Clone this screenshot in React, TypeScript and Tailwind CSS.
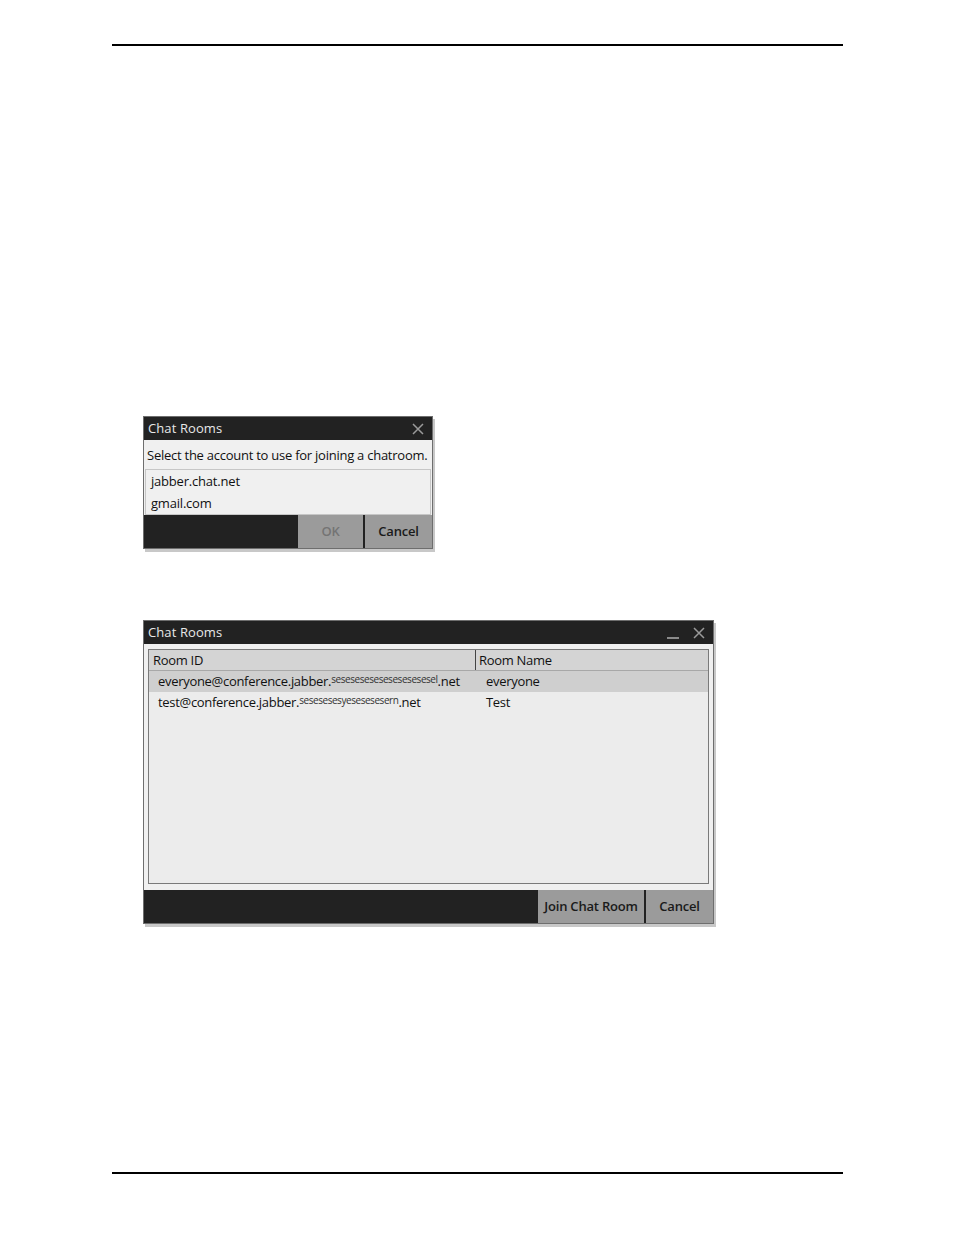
import type { ReactNode } from 'react'

const font = { fontFamily: '"Open Sans", "Noto Sans", sans-serif' }

function CloseIcon() {
  return (
    <svg width="12" height="12" viewBox="0 0 12 12" className="text-[#9a9a9a]">
      <path d="M1 1 L11 11 M11 1 L1 11" stroke="currentColor" strokeWidth="1.5" />
    </svg>
  )
}

function Dialog({
  width,
  minimize,
  children,
}: {
  width: string
  minimize?: boolean
  children: ReactNode
}) {
  return (
    <div className={`${width} border border-[#6e6e6e] bg-[#f0f0f0] shadow-[2px_3px_0_#c8c8c8]`}>
      <div className="h-[23px] bg-[#222222] flex items-center justify-between pl-[4px] pr-[8px]">
        <span className="text-[13px] text-[#e8e8e8] tracking-[0.1px]">Chat Rooms</span>
        <div className="flex items-center gap-[14px]">
          {minimize && <div className="w-[12px] h-[2px] bg-[#8a8a8a] mt-[10px]" />}
          <CloseIcon />
        </div>
      </div>
      {children}
    </div>
  )
}

function FooterButton({ label, disabled, width }: { label: string; disabled?: boolean; width: string }) {
  return (
    <div
      className={`${width} h-full bg-[#9b9b9b] flex items-center justify-center text-[13px] font-semibold tracking-[-0.2px] ${
        disabled ? 'text-[#747474]' : 'text-[#1a1a1a]'
      }`}
    >
      {label}
    </div>
  )
}

function Obfuscated({ text }: { text: string }) {
  return (
    <span className="inline-block leading-none text-[10px] tracking-[-0.45px] align-[3px] text-[#333]">
      {text}
    </span>
  )
}

export default function App() {
  return (
    <div className="w-[954px] h-[1235px] bg-white relative" style={font}>
      <div className="pt-[44px] px-[112px]">
        <div className="h-[2px] bg-black w-[731px]" />
      </div>

      <div className="pl-[143px] pt-[370px]">
        <Dialog width="w-[290px]">
          <div className="px-[3px] pt-[6px] text-[13px] text-[#111] leading-[18px] whitespace-nowrap tracking-[-0.25px]">
            Select the account to use for joining a chatroom.
          </div>
          <div className="mx-[1px] mt-[5px] border border-[#c6c6c6] bg-[#f0f0f0] text-[13px] text-[#111] pl-[5px] tracking-[-0.2px]">
            <div className="h-[22px] leading-[22px]">jabber.chat.net</div>
            <div className="h-[22px] leading-[22px]">gmail.com</div>
          </div>
          <div className="h-[33px] bg-[#222222] flex justify-end gap-[2px]">
            <FooterButton label="OK" disabled width="w-[65px]" />
            <FooterButton label="Cancel" width="w-[67px]" />
          </div>
        </Dialog>
      </div>

      <div className="pl-[143px] pt-[71px]">
        <Dialog width="w-[571px]" minimize>
          <div className="px-[4px] pt-[5px] pb-[6px]">
            <div className="h-[235px] border border-[#7a7a7a] bg-[#ececec] text-[13px] text-[#111] tracking-[-0.3px]">
              <div className="h-[21px] bg-[#d4d4d4] flex border-b border-[#a8a8a8]">
                <div className="w-[327px] border-r border-[#444] pl-[4px] leading-[20px]">Room ID</div>
                <div className="pl-[3px] leading-[20px]">Room Name</div>
              </div>
              <div className="h-[21px] bg-[#cfcfcf] flex leading-[20px]">
                <div className="w-[328px] pl-[9px] whitespace-nowrap">
                  everyone@conference.jabber.<Obfuscated text="sesesesesesesesesesesel" />.net
                </div>
                <div className="pl-[9px]">everyone</div>
              </div>
              <div className="h-[21px] flex leading-[20px]">
                <div className="w-[328px] pl-[9px] whitespace-nowrap">
                  test@conference.jabber.<Obfuscated text="sesesesesyesesesesern" />.net
                </div>
                <div className="pl-[9px]">Test</div>
              </div>
            </div>
          </div>
          <div className="h-[33px] bg-[#222222] flex justify-end gap-[2px]">
            <FooterButton label="Join Chat Room" width="w-[106px]" />
            <FooterButton label="Cancel" width="w-[67px]" />
          </div>
        </Dialog>
      </div>

      <div className="absolute left-[112px] top-[1172px] h-[2px] w-[731px] bg-black" />
    </div>
  )
}
